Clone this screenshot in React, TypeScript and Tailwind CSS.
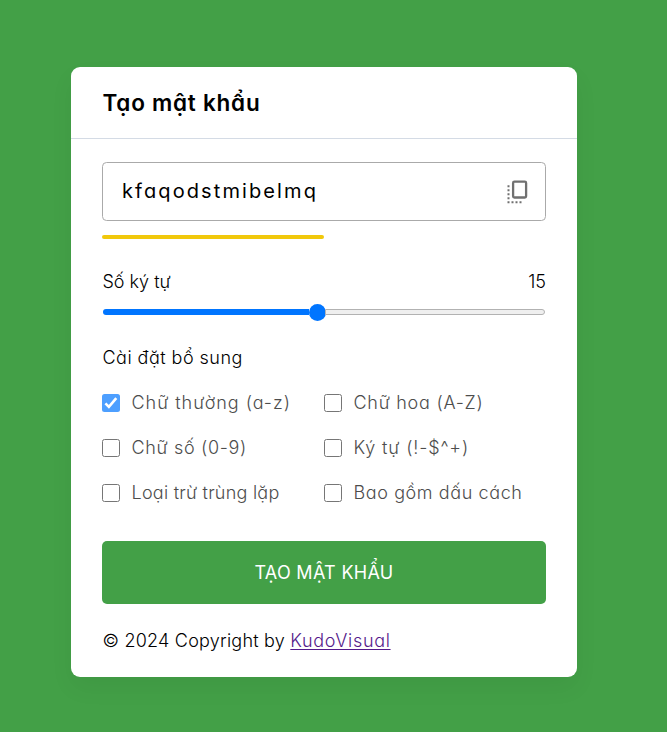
import React from "react";

function Check({ checked = false }: { checked?: boolean }) {
  return (
    <span
      className={
        checked
          ? "flex h-[18px] w-[18px] shrink-0 items-center justify-center rounded-[2.5px] bg-[#4d9fff]"
          : "h-[18px] w-[18px] shrink-0 rounded-[2.5px] border border-[#767676] bg-white"
      }
    >
      {checked && (
        <svg width="18" height="18" viewBox="0 0 18 18" fill="none" stroke="#fff" strokeWidth="2.6">
          <path d="M3.4 9.3 L6.9 12.8 L14.3 4.2" />
        </svg>
      )}
    </span>
  );
}

const options = [
  { text: "Chữ thường (a-z)", checked: true, spacing: "tracking-[0.98px]" },
  { text: "Chữ hoa (A-Z)", spacing: "tracking-[0.74px]" },
  { text: "Chữ số (0-9)", spacing: "tracking-[0.66px]" },
  { text: "Ký tự (!-$^+)", spacing: "tracking-[0.86px]" },
  { text: "Loại trừ trùng lặp", spacing: "tracking-[0.24px]" },
  { text: "Bao gồm dấu cách", spacing: "tracking-[0.6px]" },
];

export default function App() {
  return (
    <div className="flex h-[732px] w-[667px] flex-col bg-[#43a047] pt-[67px] pl-[71px] font-['Inter','Noto_Sans',sans-serif] text-[18px] font-[330] whitespace-nowrap text-black [font-feature-settings:'cv11']">
      <main className="flex h-[610px] w-[506px] flex-col rounded-[9px] bg-white shadow-[0_11px_23px_rgba(0,0,0,0.05)]">
        <h2 className="flex h-[72px] shrink-0 items-center border-b border-[#d4dbe5] pl-[31.5px] text-[22.5px] font-semibold">
          <span className="tracking-[0.76px]">Tạo mật khẩu</span>
        </h2>
        <div className="flex flex-col px-[31px] pt-[23px]">
          <div className="flex h-[59px] items-center justify-between rounded-[4.5px] border border-[#aaa] pr-[17px] pl-[19px] text-[20px] font-normal">
            <span className="pb-px tracking-[2.1px]">kfaqodstmibelmq</span>
            <svg width="21" height="24" viewBox="0 0 21 24" fill="none" stroke="#707070">
              <rect x="6.1" y="1.7" width="13" height="15.8" rx="1.3" strokeWidth="2.3" />
              <path d="M1.5 5.2v18" strokeWidth="2" strokeDasharray="2 2" />
              <path d="M4.5 22.2h10" strokeWidth="2" strokeDasharray="2 2" />
            </svg>
          </div>
          <div className="mt-3.5 h-1 w-[222px] rounded-full bg-[#f1c80b]" />
          <div className="mt-7 flex h-7 items-center justify-between pl-[0.5px]">
            <span>Số ký tự</span>
            <span>15</span>
          </div>
          <div className="mt-2 flex h-[18px] items-center pl-px">
            <span className="h-1.5 w-[206px] rounded-l-full bg-[#0075ff]" />
            <span className="-ml-[0.5px] h-[17px] w-[17px] rounded-full bg-[#0075ff]" />
            <span className="-ml-px mr-px h-1.5 grow rounded-r-full border border-[#b2b2b2] bg-[#efefef]" />
          </div>
          <p className="mt-[22px] flex h-7 items-center pl-[0.5px]">
            <span className="tracking-[0.47px]">Cài đặt bổ sung</span>
          </p>
          <div className="mt-[18px] grid grid-cols-[222px_222px] gap-y-[17px] text-[#4d4d4d]">
            {options.map((o) => (
              <label key={o.text} className="flex h-7 items-center gap-[11.5px]">
                <Check checked={o.checked} />
                <span className="pb-0.5">
                  <span className={o.spacing}>{o.text}</span>
                </span>
              </label>
            ))}
          </div>
          <button className="mt-[34px] h-[63px] rounded-[5px] bg-[#43a047] text-[18px] font-normal text-white">
            <span className="tracking-[0.3px]">TẠO MẬT KHẨU</span>
          </button>
          <p className="mt-[22px] flex h-7 items-center pl-[0.5px]">
            <span className="tracking-[0.22px] whitespace-pre">© 2024 Copyright by </span>
            <a className="tracking-[0.68px] text-[#551a8b] underline decoration-1 underline-offset-2">KudoVisual</a>
          </p>
        </div>
      </main>
    </div>
  );
}
